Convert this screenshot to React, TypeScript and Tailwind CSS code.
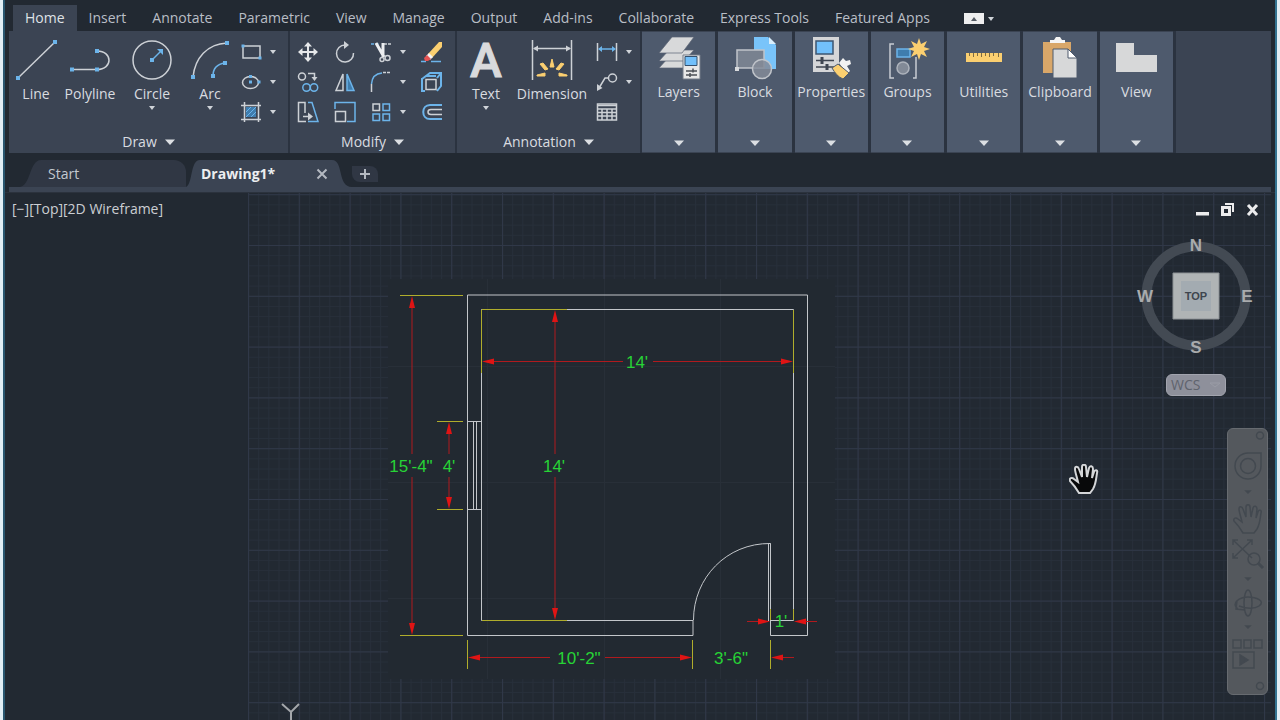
import type { ReactNode } from "react";
import clsx from "clsx";

const RIBBON_TABS = [
  "Home",
  "Insert",
  "Annotate",
  "Parametric",
  "View",
  "Manage",
  "Output",
  "Add-ins",
  "Collaborate",
  "Express Tools",
  "Featured Apps",
];

const LIGHT = "#cdd1d6";
const BLUE = "#6cb4ea";
const YELLOW = "#fbcf70";

interface IconProps {
  size?: number;
  children: ReactNode;
}

function Icon({ size = 24, children }: IconProps) {
  return (
    <svg
      width={size}
      height={size}
      viewBox={`0 0 ${size} ${size}`}
      fill="none"
      stroke={LIGHT}
      strokeWidth={1.5}
      className="block shrink-0 overflow-visible"
      aria-hidden="true"
    >
      {children}
    </svg>
  );
}

function Caret({ large = false }: { large?: boolean }) {
  return large ? (
    <svg width="10" height="6" viewBox="0 0 10 6" aria-hidden="true">
      <path d="M0 0.5h10L5 6z" fill="#dcdfe3" />
    </svg>
  ) : (
    <svg width="6" height="4" viewBox="0 0 6 4" aria-hidden="true">
      <path d="M0 0h6L3 4z" fill="#d0d4d9" />
    </svg>
  );
}

function Node({ x, y, r = 2 }: { x: number; y: number; r?: number }) {
  return (
    <rect
      x={x - r}
      y={y - r}
      width={r * 2}
      height={r * 2}
      fill={BLUE}
      stroke="none"
    />
  );
}

/* ---------- large ribbon icons ---------- */

const LineIcon = () => (
  <Icon size={42}>
    <path d="M3 39 40 3" />
    <Node x={3} y={39} />
    <Node x={40} y={3} />
  </Icon>
);

const PolylineIcon = () => (
  <Icon size={42}>
    <path d="M3 30.5h25c16 0 16-18.5 0-18.5" />
    <Node x={3} y={30.5} />
    <Node x={28} y={30.5} />
    <Node x={28} y={12} />
  </Icon>
);

const CircleIcon = () => (
  <Icon size={42}>
    <circle cx="21" cy="21" r="19" />
    <path d="M21 21 30 12" stroke={BLUE} />
    <path d="M26 10h6v6z" fill={BLUE} stroke="none" />
    <Node x={21} y={21} />
  </Icon>
);

const ArcIcon = () => (
  <Icon size={42}>
    <path d="M4 38C6 19 18 5 38 4" />
    <path d="M24 37c0-8 4-12 12-13" stroke={BLUE} />
    <Node x={4} y={38} />
    <Node x={38} y={4} />
    <Node x={24} y={37} />
    <Node x={36} y={24} />
  </Icon>
);

const TextIcon = () => (
  <Icon size={42}>
    <text
      x="21"
      y="38"
      textAnchor="middle"
      fontSize="48"
      fontWeight="500"
      fill="#d9dadc"
      stroke="#d9dadc"
      strokeWidth="1"
      className="font-[Roboto,sans-serif]"
    >
      A
    </text>
  </Icon>
);

const DimensionIcon = () => (
  <Icon size={42}>
    <path d="M1.5 1v40M40.5 1v40M3 9.5h36" />
    <path d="M2 9.5l5-3v6zM40 9.5l-5-3v6z" fill={LIGHT} stroke="none" />
    <path
      d="M21 20l2 8h-4zM9 25l3-1 5 6-3 1zM33 25l-3-1-5 6 3 1zM6 36l8-2v3H6zM36 36l-8-2v3h8z"
      fill={YELLOW}
      stroke={YELLOW}
      strokeWidth="1"
    />
  </Icon>
);

const LayersIcon = () => (
  <Icon size={42}>
    <g fill="#d8d9da" stroke="#5a6373" strokeWidth="0.7">
      <path d="M1 31 10 21h24l-9 10z" />
      <path d="M1 24 11 13h25l-10 11z" />
      <path d="M1 16 14 0h22L24 16z" />
    </g>
    <path d="M25 18h17v24H25z" fill="#e8e8e8" stroke="#737b87" strokeWidth="1" />
    <path d="M27 19.5h12v9H27z" fill="#72c0fb" stroke="#35506d" strokeWidth="1" />
    <path d="M28 34h11M28 38h11M35 31.5v4M32 36v4" stroke="#4b4f56" />
  </Icon>
);

const BlockIcon = () => (
  <Icon size={42}>
    <path d="M20 0h14l8 8v24H20z" fill="#79c4fa" stroke="none" />
    <path d="M35 0v7h7z" fill="#d9eefb" stroke="none" />
    <path d="M3 13h27v18H3z" fill="#78818f" stroke="#c0c4ca" />
    <circle cx="28" cy="32" r="9.5" fill="#848b98" fillOpacity=".85" stroke="#c0c4ca" />
    <path d="M1 30h4v4H1z" fill="#d8dadd" stroke="none" />
  </Icon>
);

const PropertiesIcon = () => (
  <Icon size={42}>
    <path d="M3 0h26v35H3z" fill="#d5d6d8" stroke="none" />
    <path d="M6 4h17v13H6z" fill="#72c0fb" stroke="#3d5672" />
    <path d="M6 23.5h18M6 30h18" stroke="#3f4550" />
    <path d="M12 20v7M17 27v6" stroke="#3f4550" strokeWidth="3" />
    <path d="M29 26l4-5 3 3 4-1 1 4-4 2 3 5-3 3z" fill="#f2f2f2" stroke="none" />
    <path d="M22 31l6-4 11 9-6 6c-5-2-8-6-11-11z" fill={YELLOW} stroke="#4e5a6d" strokeWidth="1" />
  </Icon>
);

const GroupsIcon = () => (
  <Icon size={42}>
    <path d="M8 7H4v34h4M27 41h3V20" stroke="#c8ccd2" />
    <path d="M11 12h13v8H11z" fill="#3f7dae" stroke={BLUE} />
    <circle cx="17" cy="31" r="6" fill="#828a97" stroke="#adb3bc" />
    <path
      d="m33 1 2 6 6-3-3 6 6 2-6 2 3 6-6-3-2 6-2-6-6 3 3-6-6-2 6-2-3-6 6 3z"
      fill={YELLOW}
      stroke="none"
    />
  </Icon>
);

const UtilitiesIcon = () => (
  <Icon size={42}>
    <path d="M3 16h36v9H3z" fill={YELLOW} stroke="none" />
    <path
      d="M6.5 16v3M10.5 16v4M14.5 16v3M18.5 16v4M22.5 16v3M26.5 16v4M30.5 16v3M35.5 16v4"
      stroke="#7e6c43"
      strokeWidth="1"
    />
  </Icon>
);

const ClipboardIcon = () => (
  <Icon size={42}>
    <path d="M4 5h28v31H4z" fill="#d9a769" stroke="none" />
    <path d="M11 6V3h4l2-3h4l2 3h3v3z" fill="#f5f5f5" stroke="none" />
    <path d="M14 12h15l9 9v20H14z" fill="#d7d8d9" stroke="#4e5a6d" strokeWidth="1" />
    <path d="M29 12v9h9z" fill="#fff" stroke="#4e5a6d" strokeWidth="1" />
  </Icon>
);

const ViewIcon = () => (
  <Icon size={42}>
    <path d="M1 6h18v12h23v17H1z" fill="#d7d8d9" stroke="none" />
  </Icon>
);

/* ---------- small ribbon icons ---------- */

const RectangleIcon = () => (
  <Icon>
    <path d="M4 6h17v12H4z" />
    <Node x={4} y={6} r={1.5} />
    <Node x={21} y={18} r={1.5} />
  </Icon>
);

const EllipseIcon = () => (
  <Icon>
    <ellipse cx="11.5" cy="12.5" rx="8" ry="6" />
    <Node x={11.5} y={12} r={1.5} />
    <Node x={11.5} y={6.5} r={1.5} />
    <Node x={20} y={12} r={1.5} />
  </Icon>
);

const HatchIcon = () => (
  <Icon>
    <path d="M7 7h10v10H7z" fill="#3f7dae" stroke="none" />
    <path d="M7 12l5-5M7 17 17 7M12 17l5-5" stroke={BLUE} strokeWidth="1" />
    <path d="M5.5 2v20M19.5 2v20M2 5.5h20M2 19.5h20" />
  </Icon>
);

const MoveIcon = () => (
  <Icon>
    <path d="M12 5v14M5 12h14" stroke="#e6e8ea" strokeWidth="2" />
    <path
      d="M12 2l4 4.5H8zM12 22l4-4.5H8zM2 12l4.5-4v8zM22 12l-4.5-4v8z"
      fill="#e6e8ea"
      stroke="none"
    />
  </Icon>
);

const RotateIcon = () => (
  <Icon>
    <path d="M12 5a8.5 8.5 0 1 0 8.5 8" />
    <path d="M11 1l5 4-5 4z" fill={LIGHT} stroke="none" />
  </Icon>
);

const TrimIcon = () => (
  <Icon>
    <path d="M2 4h8" stroke={BLUE} strokeDasharray="3 1.5" />
    <path d="M15 4h8" strokeDasharray="3 1" />
    <path d="M7 3l8 14M14 3v14" stroke="#eceef0" strokeWidth="3" />
    <circle cx="13" cy="19.5" r="2" />
    <circle cx="18.5" cy="18" r="2.5" />
  </Icon>
);

const EraseIcon = () => (
  <Icon>
    <path d="M2 21.5h5M12 21.5h10" stroke={BLUE} />
    <path d="M9 14 20 2h3v5L13 18z" fill={YELLOW} stroke="none" />
    <path d="M7 16l3-3 4 4-3 3z" fill="#f4f4f4" stroke="none" />
    <path d="M5 18l3-3 4 4-3 2H6z" fill="#e55353" stroke="none" />
  </Icon>
);

const CopyIcon = () => (
  <Icon>
    <circle cx="6" cy="6.5" r="3.5" />
    <path d="M12 3.5h6.5v5" />
    <path d="M15.5 7h6l-3 4z" fill={LIGHT} stroke="none" />
    <circle cx="10.5" cy="17.5" r="3.7" stroke={BLUE} />
    <circle cx="18" cy="17.5" r="3.7" stroke={BLUE} />
  </Icon>
);

const MirrorIcon = () => (
  <Icon>
    <path d="M10 4v16.5H3z" />
    <path d="M14 4v16.5h7z" fill="#3f7dae" stroke={BLUE} />
  </Icon>
);

const FilletIcon = () => (
  <Icon>
    <path d="M2.5 22v-8" />
    <path d="M2.5 14C3 7 7 3.500 13 3" stroke={BLUE} />
    <path d="M14 2.5h8" strokeDasharray="3 1" />
  </Icon>
);

const ExplodeIcon = () => (
  <Icon>
    <path d="M3 8v13h3M7 6l4-3h11v13l-4 5M18 8l4-5M3 9l4-3h10" stroke={BLUE} strokeWidth="2" />
    <path d="M7 9.500h10v10H7z" fill="#3b4453" />
  </Icon>
);

const StretchIcon = () => (
  <Icon>
    <path d="M9 13V2.5H2.5v19H10" />
    <path d="M12 2.5h4l6 19H12" stroke={BLUE} />
    <path d="M7 16.5h7" />
    <path d="M12 12.5l5 4-5 4z" fill={LIGHT} stroke="none" />
  </Icon>
);

const ScaleIcon = () => (
  <Icon>
    <path d="M2 9V2.5h20v19h-8" stroke={BLUE} />
    <path d="M2.5 11.5h10v10h-10z" />
  </Icon>
);

const ArrayIcon = () => (
  <Icon>
    <path d="M4 4h6.5v6.5H4z" />
    <path d="M14 4h6.5v6.5H14zM4 14h6.5v6.5H4zM14 14h6.5v6.5H14z" stroke={BLUE} />
  </Icon>
);

const OffsetIcon = () => (
  <Icon>
    <path d="M23 5H11c-9 0-9 14 0 14h12" stroke={BLUE} strokeWidth="2" />
    <path d="M23 9.5H12c-4 0-4 5 0 5h11" />
  </Icon>
);

const LinearIcon = () => (
  <Icon>
    <path d="M2.5 3v18M21.5 3v18" />
    <path d="M4 9h16" stroke={BLUE} />
    <path d="M3 9l4-3v6zM21 9l-4-3v6z" fill={BLUE} stroke="none" />
  </Icon>
);

const LeaderIcon = () => (
  <Icon>
    <circle cx="17.5" cy="8" r="4" />
    <path d="M13.5 8H10L4 18" />
    <path d="M2 21v-7l5.5 4z" fill={LIGHT} stroke="none" />
  </Icon>
);

const TableIcon = () => (
  <Icon>
    <path d="M2.5 4h19v16h-19z" />
    <path d="M2.5 5.5h19M2.5 9h19M2.5 12.5h19M2.5 16h19M7 9v11M12 9v11M17 9v11" />
  </Icon>
);

/* ---------- ribbon parts ---------- */

interface BigToolProps {
  label: string;
  icon: ReactNode;
  className: string;
  menu?: boolean;
}

function BigTool({ label, icon, className, menu = false }: BigToolProps) {
  return (
    <button
      type="button"
      className={clsx("flex flex-col items-center whitespace-nowrap", className)}
    >
      {icon}
      <span className="mt-[3px] leading-5">{label}</span>
      {menu && (
        <span className="mt-0.5">
          <Caret />
        </span>
      )}
    </button>
  );
}

function SmallTool({ label, children }: { label: string; children: ReactNode }) {
  return (
    <button
      type="button"
      aria-label={label}
      className="flex h-[30px] items-center justify-center"
    >
      {children}
    </button>
  );
}

interface PanelProps {
  title: string;
  className: string;
  children: ReactNode;
}

function Panel({ title, className, children }: PanelProps) {
  return (
    <section
      className={clsx(
        "flex h-[122px] shrink-0 flex-col border-r-2 border-[#2b3340]",
        className,
      )}
    >
      <div className="flex flex-1">{children}</div>
      <button
        type="button"
        className="flex h-[23px] items-center justify-center gap-2 leading-5"
      >
        {title}
        <Caret large />
      </button>
    </section>
  );
}

const COLLAPSED_PANELS = [
  { label: "Layers", icon: <LayersIcon /> },
  { label: "Block", icon: <BlockIcon /> },
  { label: "Properties", icon: <PropertiesIcon /> },
  { label: "Groups", icon: <GroupsIcon /> },
  { label: "Utilities", icon: <UtilitiesIcon /> },
  { label: "Clipboard", icon: <ClipboardIcon /> },
  { label: "View", icon: <ViewIcon /> },
];

function Ribbon() {
  return (
    <div className="mx-1 flex h-[122px] overflow-hidden bg-[#3b4453]">
      <Panel title="Draw" className="w-[281px]">
        <div className="flex pt-2">
          <BigTool label="Line" icon={<LineIcon />} className="w-[54px]" />
          <BigTool label="Polyline" icon={<PolylineIcon />} className="w-[54px]" />
          <BigTool label="Circle" icon={<CircleIcon />} className="w-[70px]" menu />
          <BigTool label="Arc" icon={<ArcIcon />} className="w-[46px]" menu />
        </div>
        <div className="grid grid-cols-[36px_8px] content-start pt-1.5">
          <SmallTool label="Rectangle"><RectangleIcon /></SmallTool>
          <SmallTool label="Rectangle options"><Caret /></SmallTool>
          <SmallTool label="Ellipse"><EllipseIcon /></SmallTool>
          <SmallTool label="Ellipse options"><Caret /></SmallTool>
          <SmallTool label="Hatch"><HatchIcon /></SmallTool>
          <SmallTool label="Hatch options"><Caret /></SmallTool>
        </div>
      </Panel>

      <Panel title="Modify" className="w-[167px]">
        <div className="grid grid-cols-[36px_37px_36px_8px_48px] content-start pt-1.5">
          <SmallTool label="Move"><MoveIcon /></SmallTool>
          <SmallTool label="Rotate"><RotateIcon /></SmallTool>
          <SmallTool label="Trim"><TrimIcon /></SmallTool>
          <SmallTool label="Trim options"><Caret /></SmallTool>
          <SmallTool label="Erase"><EraseIcon /></SmallTool>
          <SmallTool label="Copy"><CopyIcon /></SmallTool>
          <SmallTool label="Mirror"><MirrorIcon /></SmallTool>
          <SmallTool label="Fillet"><FilletIcon /></SmallTool>
          <SmallTool label="Fillet options"><Caret /></SmallTool>
          <SmallTool label="Explode"><ExplodeIcon /></SmallTool>
          <SmallTool label="Stretch"><StretchIcon /></SmallTool>
          <SmallTool label="Scale"><ScaleIcon /></SmallTool>
          <SmallTool label="Array"><ArrayIcon /></SmallTool>
          <SmallTool label="Array options"><Caret /></SmallTool>
          <SmallTool label="Offset"><OffsetIcon /></SmallTool>
        </div>
      </Panel>

      <Panel title="Annotation" className="w-[185px]">
        <div className="flex pt-2">
          <BigTool label="Text" icon={<TextIcon />} className="w-[58px]" menu />
          <BigTool label="Dimension" icon={<DimensionIcon />} className="w-[74px]" />
        </div>
        <div className="grid grid-cols-[36px_8px] content-start pt-1.5">
          <SmallTool label="Linear"><LinearIcon /></SmallTool>
          <SmallTool label="Linear options"><Caret /></SmallTool>
          <SmallTool label="Leader"><LeaderIcon /></SmallTool>
          <SmallTool label="Leader options"><Caret /></SmallTool>
          <SmallTool label="Table"><TableIcon /></SmallTool>
        </div>
      </Panel>

      <div className="grid w-[534px] shrink-0 grid-cols-7">
        {COLLAPSED_PANELS.map((panel) => (
          <div key={panel.label} className="flex border-r-3 border-[#2b3340] py-px">
            <button
              type="button"
              className="flex flex-1 flex-col items-center bg-[#4e5a6d] pt-[5px] pb-1.5"
            >
              {panel.icon}
              <span className="mt-[3px] leading-5">{panel.label}</span>
              <span className="mt-auto">
                <Caret large />
              </span>
            </button>
          </div>
        ))}
      </div>
    </div>
  );
}

function RibbonTabs() {
  return (
    <nav className="flex h-[31px] items-end pl-2 whitespace-nowrap text-[#b9bec6]">
      {RIBBON_TABS.map((tab) => (
        <button
          key={tab}
          type="button"
          className={clsx(
            "h-[26px] leading-6",
            tab === "Home" ? "mr-3 bg-[#3b4453] px-3 text-[#dfe2e6]" : "mr-[26px]",
          )}
        >
          {tab}
        </button>
      ))}
      <button
        type="button"
        aria-label="Minimize ribbon"
        className="mb-[7px] ml-2 flex items-center gap-1"
      >
        <svg width="20" height="11" viewBox="0 0 20 11" aria-hidden="true">
          <path d="M0 0h20v11H0z" fill="#eeeeef" />
          <path d="M7 8l3-4 3 4z" fill="#555b64" />
        </svg>
        <Caret />
      </button>
    </nav>
  );
}

function FileTabs() {
  return (
    <div className="mx-1 flex h-[39px] items-stretch border-b-5 border-[#3b4453] pt-[7px] leading-7">
      <svg width="32" height="27" viewBox="0 0 32 27" aria-hidden="true">
        <path d="M0 27h10c12 0 10-27 22-27v27z" fill="#303744" />
      </svg>
      <button
        type="button"
        className="w-[145px] rounded-tr-xl bg-[#303744] pb-1 pl-[7px] text-left text-[#c4c9d0]"
      >
        Start
      </button>
      <div className="flex">
        <svg width="14" height="27" viewBox="0 0 14 27" aria-hidden="true">
          <path d="M0 27C7 24 4 0 14 0v27z" fill="#3b4453" />
        </svg>
        <div className="flex w-[132px] items-center justify-between bg-[#3b4453] pr-1 pl-px">
          <button type="button" className="font-bold text-[#eceef0]">
            Drawing1*
          </button>
          <button type="button" aria-label="Close Drawing1">
            <svg width="12" height="12" viewBox="0 0 12 12" aria-hidden="true">
              <path d="M1.5 1.5l9 9M10.5 1.5l-9 9" stroke="#b4b9c1" strokeWidth="2" />
            </svg>
          </button>
        </div>
        <svg width="20" height="27" viewBox="0 0 20 27" aria-hidden="true">
          <path d="M0 0c12 0 5 27 20 27H0z" fill="#3b4453" />
        </svg>
      </div>
      <button
        type="button"
        aria-label="New drawing"
        className="mt-1.5 flex h-4 w-[26px] items-center justify-center rounded-tr-lg rounded-bl-lg bg-[#303744]"
      >
        <svg width="12" height="12" viewBox="0 0 12 12" aria-hidden="true">
          <path d="M6 1v10M1 6h10" stroke="#b4b9c1" strokeWidth="2" />
        </svg>
      </button>
    </div>
  );
}

/* ---------- model space ---------- */

function SpaceGrid() {
  return (
    <svg className="h-full w-full" aria-hidden="true">
      <defs>
        <pattern id="minor" width="10.16" height="10.16" y="1.2" patternUnits="userSpaceOnUse">
          <path d="M0 .5h10.16M.5 0v10.16" stroke="#272f3a" />
        </pattern>
        <pattern id="major" width="50.8" height="50.8" y="1.2" patternUnits="userSpaceOnUse">
          <path d="M0 .5h50.8M.5 0v50.8" stroke="#303848" />
        </pattern>
      </defs>
      <rect width="100%" height="100%" fill="url(#minor)" />
      <rect width="100%" height="100%" fill="url(#major)" />
    </svg>
  );
}

function Arrow({ x, y, dir }: { x: number; y: number; dir: "up" | "down" | "left" | "right" }) {
  const angle = { right: 0, down: 90, left: 180, up: 270 }[dir];
  return (
    <path
      d="M0 0-12-3v6z"
      fill="#e01414"
      transform={`translate(${x} ${y}) rotate(${angle})`}
    />
  );
}

function FloorPlan() {
  return (
    <svg width="447" height="400" viewBox="388 279 447 400" role="img" aria-label="Floor plan">
      <path d="M388 279h447v400H388z" fill="#222931" />
      <path
        d="M487.5 279v400M604.5 279v400M720.5 279v400M388 366.5h447M388 482.5h447M388 598.5h447"
        stroke="#282f38"
      />
      <g fill="none" stroke="#c3c6ca">
        <path d="M693 620v15.5H467.5V295h340v340.5h-37V543.5h-2V621" />
        <path d="M693 620.5H481.5V309.5h312V620.5H770" />
        <path d="M693.5 620c0-42 33-77 77-76.500" />
        <path d="M467.5 421.5h14M467.5 509.5h14M473.5 421.5v88M476.5 421.5v88" />
      </g>
      <path
        d="M400 295.5h63M400 635.5h63M437 421.5h26M437 509.5h26M482 309.5h85M481.5 310v63M793.5 310v63M482 620.5h85M467.5 640v29M692.5 640v29M770.5 640v29M770.5 609v11M793.5 609v11"
        stroke="#b0ad2c"
      />
      <g stroke="#b01a1e">
        <path d="M412 300v154M412 477v154M449 426v28M449 477v28M555 314v140M555 477v140" />
        <path d="M486 361.5h137M653 361.5h136M472 657.5h78M605 657.5h83M774 657.5h20M747 621.5h16M800 621.5h17" />
      </g>
      <Arrow x={412} y={296} dir="up" />
      <Arrow x={412} y={635} dir="down" />
      <Arrow x={449} y={422} dir="up" />
      <Arrow x={449} y={509} dir="down" />
      <Arrow x={555} y={310} dir="up" />
      <Arrow x={555} y={620} dir="down" />
      <Arrow x={482} y={361.5} dir="left" />
      <Arrow x={793} y={361.5} dir="right" />
      <Arrow x={468} y={657.5} dir="left" />
      <Arrow x={692} y={657.5} dir="right" />
      <Arrow x={771} y={657.5} dir="left" />
      <Arrow x={770} y={621.5} dir="right" />
      <Arrow x={794} y={621.5} dir="left" />
      <g
        fill="#27d336"
        textAnchor="middle"
        className="font-['Liberation_Sans',Arial,sans-serif] text-[17px]"
      >
        <text x="411" y="472">15'-4"</text>
        <text x="449" y="472">4'</text>
        <text x="554" y="472">14'</text>
        <text x="637" y="368">14'</text>
        <text x="579" y="664">10'-2"</text>
        <text x="731" y="664">3'-6"</text>
        <text x="781" y="627">1'</text>
      </g>
    </svg>
  );
}

function ViewCube() {
  return (
    <svg
      width="122"
      height="122"
      viewBox="0 0 122 122"
      fontWeight="700"
      textAnchor="middle"
      role="img"
      aria-label="View cube"
      className="font-['Liberation_Sans',Arial,sans-serif]"
    >
      <circle cx="61" cy="61" r="49.5" fill="none" stroke="#434a53" strokeWidth="10" />
      <path d="M38 38h46v46H38z" fill="#b0b4b5" stroke="#8c9194" />
      <path d="M46 46h30v30H46z" fill="#a3abb1" />
      <text x="61" y="65" fontSize="11" fill="#3e454e">TOP</text>
      <g fontSize="17" fill="#a9abad">
        <text x="61" y="16">N</text>
        <text x="61" y="118">S</text>
        <text x="10" y="67">W</text>
        <text x="112" y="67">E</text>
      </g>
    </svg>
  );
}

const HAND =
  "M10 29C7 24 4 20 1 17c-1-3 2-4 4-2l4 3C8 13 6 8 6 5c0-3 3-3 4 0l3 8V3c0-3 4-3 4 0l1 10 2-9c1-3 4-2 4 1l-1 9 2-6c1-3 4-2 3 1-1 6-1 11-4 16l-3 4z";

function NavigationBar() {
  return (
    <div className="rounded-md border border-[#676b70] bg-[#54585d]">
      <svg
        width="39"
        height="265"
        viewBox="0 0 39 265"
        fill="none"
        stroke="#434950"
        strokeWidth="1.5"
        role="img"
        aria-label="Navigation bar"
      >
        <circle cx="32" cy="6.5" r="3.5" />
        <path d="M20 24h13v13a13 13 0 1 1-13-13z" />
        <circle cx="20" cy="37" r="7.5" />
        <path d="M18 62h4l-2 2z" fill="#434950" />
        <path d={HAND} transform="translate(5 75)" />
        <path d="M5 111l19 18M24 111 5 129M5 116v-5h5M19 111h5v5M5 124v5h5" />
        <circle cx="26" cy="130" r="6" />
        <path d="M30 134l5 5" strokeWidth="3" />
        <path d="M18 149h4l-2 2z" fill="#434950" />
        <ellipse cx="20" cy="174" rx="4" ry="13" />
        <path d="M10 180c-8-6 2-12 10-12s18 4 11 9c-4 3-12 3-20 0M9 172l-1 8 9 1" />
        <path d="M18 197h4l-2 2z" fill="#434950" />
        <path d="M5 211h8v8H5zM16 211h7v8h-7zM26 211h8v8h-8zM5 223h21v16H5z" />
        <path d="M12 226l8 5-8 5z" fill="#434950" />
        <circle cx="32" cy="257" r="3.5" />
      </svg>
    </div>
  );
}

function ModelSpace() {
  return (
    <main className="relative flex flex-1 items-start justify-between overflow-hidden border-t border-[#2b323d]">
      <div className="absolute inset-y-0 right-1 left-[243px]">
        <SpaceGrid />
      </div>
      <div className="absolute top-[86px] left-[383px]">
        <FloorPlan />
      </div>

      <p className="relative mt-1.5 ml-[7px] leading-5 text-[#cbced3]">
        [−][Top][2D Wireframe]
      </p>

      <div className="relative flex flex-col items-end">
        <div className="mt-2.5 mr-4 flex gap-3">
          <button type="button" aria-label="Minimize">
            <svg width="13" height="14" viewBox="0 0 13 14">
              <path d="M0 9h13v3.5H0z" fill="#ececed" />
            </svg>
          </button>
          <button type="button" aria-label="Restore">
            <svg width="13" height="14" viewBox="0 0 13 14" fill="none" stroke="#ececed">
              <path d="M1.5 4.5h7v7h-7z" strokeWidth="3" />
              <path d="M4 1h8v8" strokeWidth="2" />
            </svg>
          </button>
          <button type="button" aria-label="Close">
            <svg width="13" height="14" viewBox="0 0 13 14">
              <path d="M2 2l9 10M11 2 2 12" stroke="#ececed" strokeWidth="3" />
            </svg>
          </button>
        </div>
        <div className="mt-[18px] mr-[18px]">
          <ViewCube />
        </div>
        <button
          type="button"
          className="mt-[17px] mr-[49px] flex h-[22px] w-[60px] items-center justify-between rounded-md border border-[#a2a4ae] bg-[#8e909b] px-1 leading-4 text-[#5f636d]"
        >
          WCS
          <svg width="12" height="6" viewBox="0 0 12 6" fill="none" aria-hidden="true">
            <path d="M1 1h10L6 5z" stroke="#9a9ca6" />
          </svg>
        </button>
        <div className="mt-8 mr-[7px]">
          <NavigationBar />
        </div>
      </div>

      {/* pan cursor */}
      <svg
        width="30"
        height="32"
        viewBox="0 0 30 32"
        className="absolute top-[271px] left-[1064px]"
        aria-hidden="true"
      >
        <path d={HAND} fill="#08090a" stroke="#d4d6d8" strokeWidth="2" />
      </svg>

      {/* UCS axis */}
      <svg
        width="20"
        height="17"
        viewBox="0 0 20 17"
        className="absolute bottom-0 left-[276px]"
        aria-hidden="true"
      >
        <path d="M1 1l9 8 8-8M10 9v8" fill="none" stroke="#a4a7ab" strokeWidth="2" />
      </svg>
    </main>
  );
}

export default function App() {
  return (
    <div className="flex min-h-screen flex-col border-r-3 border-l-3 border-[#e2eef4] font-['Open_Sans','Noto_Sans',sans-serif] text-sm text-[#d9dce0]">
      <div className="flex flex-1 flex-col border-r-2 border-l-2 border-r-[#347391] border-l-[#29566f] bg-[#222932]">
        <RibbonTabs />
        <Ribbon />
        <FileTabs />
        <ModelSpace />
      </div>
    </div>
  );
}
